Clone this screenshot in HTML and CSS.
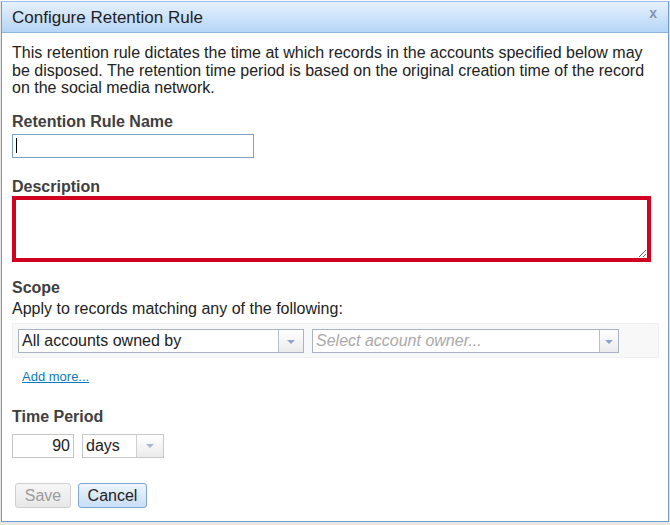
FILE: index.html
```html
<!DOCTYPE html>
<html>
<head>
<meta charset="utf-8">
<link rel="stylesheet" href="styles.css">
</head>
<body>
<div class="dialog">
  <div class="titlebar">
    <span class="title">Configure Retention Rule</span>
    <span class="close">x</span>
  </div>
  <div class="content">
    <p class="intro">This retention rule dictates the time at which records in the accounts specified below may be disposed. The retention time period is based on the original creation time of the record on the social media network.</p>

    <div class="label label-name">Retention Rule Name</div>
    <div class="textbox name-box"><span class="caret"></span></div>

    <div class="label label-desc">Description</div>
    <textarea class="desc"></textarea>

    <div class="label label-scope">Scope</div>
    <div class="hint">Apply to records matching any of the following:</div>
    <div class="scope-row">
      <div class="select sel-type">
        <span class="sel-value">All accounts owned by</span>
        <span class="sel-arrow"><i class="tri"></i></span>
      </div>
      <div class="select sel-owner">
        <span class="sel-value placeholder">Select account owner...</span>
        <span class="sel-arrow"><i class="tri"></i></span>
      </div>
    </div>
    <div class="add-wrap"><a class="add-more" href="#">Add more...</a></div>

    <div class="label label-time">Time Period</div>
    <div class="time-row">
      <div class="textbox num">90</div>
      <div class="select sel-unit">
        <span class="sel-value">days</span>
        <span class="sel-arrow"><i class="tri tri-light"></i></span>
      </div>
    </div>

    <div class="actions">
      <button class="btn btn-save" disabled>Save</button>
      <button class="btn btn-cancel">Cancel</button>
    </div>
  </div>
</div>
</body>
</html>
```

FILE: styles.css
```css
html, body {
  margin: 0;
  padding: 0;
}
body {
  background: linear-gradient(#fbfbfb 0, #fbfbfb 1px, #e6e6e6 1px);
  font-family: "Liberation Sans", Arial, sans-serif;
  color: #222;
  width: 670px;
  height: 525px;
  overflow: hidden;
}
.dialog {
  margin: 1px 0 0 1px;
  width: 668px;
  height: 521px;
  box-sizing: border-box;
  border: 1px solid #6f9cca;
  border-top-color: #9cbfe3;
  background: #fff;
}
.titlebar {
  height: 31px;
  box-sizing: border-box;
  border-bottom: 1px solid #8fb4da;
  background: linear-gradient(#e6f1fd, #b5d5f7);
  display: flex;
  justify-content: space-between;
  padding: 0 11px 0 10px;
}
.title {
  font-size: 17px;
  line-height: 31px;
  color: #1e1e1e;
}
.close {
  align-self: flex-start;
  margin-top: 4px;
  font-size: 14px;
  line-height: 14px;
  font-weight: bold;
  color: #8494a7;
}
.content {
  padding: 0 9px 0 10px;
}
.intro {
  margin: 11px 0 0;
  font-size: 16px;
  line-height: 17.5px;
}
.label {
  font-size: 16px;
  font-weight: bold;
  line-height: 18px;
  color: #404040;
}
.label-name { margin-top: 16.5px; }
.label-desc { margin-top: 19.5px; }
.label-scope { margin-top: 17px; }
.label-time { margin-top: 22.5px; }

.textbox {
  box-sizing: border-box;
  height: 24px;
  border: 1px solid #c6c6c6;
  background: #fff;
  font-size: 16px;
  line-height: 22px;
}
.name-box {
  margin-top: 3px;
  width: 242px;
  border-color: #7ea1c1;
  padding-left: 3px;
  display: flex;
}
.caret {
  display: block;
  width: 1px;
  height: 15px;
  margin-top: 3px;
  background: #000;
}
.desc {
  display: block;
  margin: 0.5px 0 0;
  width: 639px;
  height: 66px;
  box-sizing: border-box;
  border: 4px solid #d0021f;
  padding: 0;
  outline: none;
  font-family: "Liberation Sans", Arial, sans-serif;
}
.hint {
  margin-top: 3px;
  font-size: 16px;
  line-height: 18px;
}
.scope-row {
  margin-top: 5px;
  box-sizing: border-box;
  height: 35px;
  border: 1px solid #efefef;
  background: #f8f8f8;
  padding: 5px 5px 4px;
  display: flex;
  gap: 8px;
}
.select {
  box-sizing: border-box;
  height: 24px;
  border: 1px solid #aab3c5;
  background: #fff;
  display: flex;
}
.sel-value {
  flex: 1;
  padding-left: 3px;
  font-size: 16px;
  line-height: 22px;
  white-space: nowrap;
  overflow: hidden;
}
.placeholder {
  font-style: italic;
  color: #a9a9a9;
}
.sel-arrow {
  border-left: 1px solid #b6bfcf;
  background: linear-gradient(#ffffff, #ebebeb);
  display: flex;
  align-items: center;
  justify-content: center;
}
.tri {
  display: block;
  width: 0;
  height: 0;
  border-left: 4px solid transparent;
  border-right: 4px solid transparent;
  border-top: 4px solid #8ea4ca;
  margin-top: 1px;
}
.tri-light {
  border-top-color: #aab6c9;
}
.sel-type { width: 286px; }
.sel-type .sel-arrow { width: 24px; }
.sel-owner { width: 307px; }
.sel-owner .sel-arrow { width: 18px; }
.add-wrap {
  margin-top: 11px;
  padding-left: 10px;
  font-size: 13px;
  line-height: 16px;
}
.add-more {
  color: #0b78c0;
  text-decoration: underline;
}
.time-row {
  margin-top: 8px;
  display: flex;
  gap: 8px;
}
.num {
  width: 62px;
  text-align: right;
  padding-right: 3px;
}
.sel-unit {
  width: 82px;
  border-color: #c8c8c8;
}
.sel-unit .sel-arrow {
  width: 26px;
  border-left-color: #cfcfcf;
}
.actions {
  margin-top: 25.5px;
  padding-left: 3px;
  display: flex;
  gap: 7px;
}
.btn {
  height: 25px;
  box-sizing: border-box;
  border-radius: 3px;
  padding: 0;
  font-family: "Liberation Sans", Arial, sans-serif;
  font-size: 16px;
  line-height: 21px;
}
.btn-save {
  width: 56px;
  border: 1px solid #cfcfcf;
  background: linear-gradient(#f6f6f6, #e8e8e8);
  color: #9c9c9c;
}
.btn-cancel {
  width: 69px;
  border: 1px solid #7ea6cf;
  background: linear-gradient(#eef5fd, #c8ddf5);
  color: #222;
}
```
